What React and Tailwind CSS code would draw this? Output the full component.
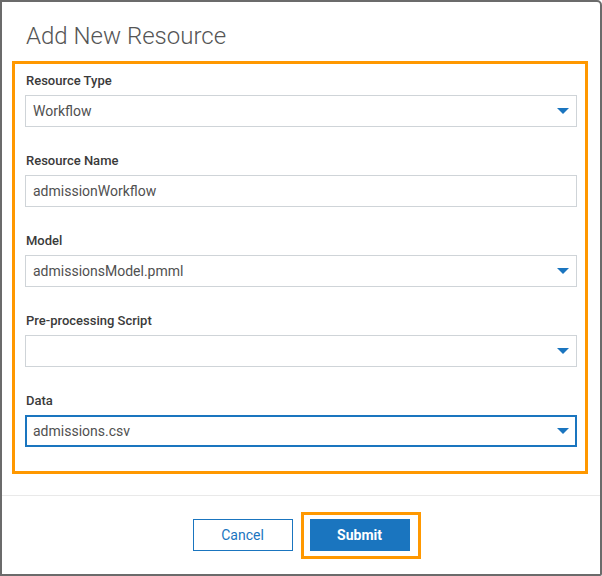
import React from 'react';

const fields = [
  { label: 'Resource Type', value: 'Workflow', select: true },
  { label: 'Resource Name', value: 'admissionWorkflow', select: false },
  { label: 'Model', value: 'admissionsModel.pmml', select: true },
  { label: 'Pre-processing Script', value: '', select: true },
  { label: 'Data', value: 'admissions.csv', select: true, focused: true },
];

function Caret() {
  return (
    <svg width="12" height="6" viewBox="0 0 12 6" className="shrink-0">
      <path d="M0 0 H12 L6 6 Z" fill="#1a75bf" />
    </svg>
  );
}

function Field({ label, value, select, focused }) {
  return (
    <div className="flex flex-col">
      <label className="text-[13px] leading-4 font-medium text-[#3a3a3a] pl-px mb-[6px]">{label}</label>
      <div
        className={
          'h-8 flex items-center justify-between bg-white ' +
          (focused ? 'border-2 border-[#1a75bf] pl-[6px] pr-[6px]' : 'border border-[#cfd4d8] pl-[7px] pr-[7px]')
        }
      >
        <span className="text-[14px] text-[#505050]">{value}</span>
        {select && <Caret />}
      </div>
    </div>
  );
}

export default function App() {
  return (
    <div
      className="w-[602px] h-[576px] bg-white border-2 border-[#6b6b6b] rounded-tr-[5px] rounded-br-[2px] flex flex-col"
      style={{ fontFamily: 'Roboto, "Liberation Sans", sans-serif' }}
    >
      <h1 className="pl-6 pt-[20px] text-[24px] leading-7 font-light text-[#555] mb-[11px]">Add New Resource</h1>

      <div className="ml-[10px] mr-[12px] border-[3px] border-[#ff9800] pl-[10px] pr-[8px] pt-[9px] pb-[24px] flex flex-col gap-[26px]">
        {fields.map((f) => (
          <Field key={f.label} {...f} />
        ))}
      </div>

      <div className="mt-[21px] border-t border-[#e9e9e9] flex-1 flex justify-center items-start pt-[23px] gap-[17px]">
        <button className="w-[100px] h-8 border border-[#1a75bf] text-[#1a75bf] text-[14px] bg-white">Cancel</button>
        <span className="relative">
          <span className="absolute -left-[9px] -right-[11px] -top-[7px] -bottom-[8px] border-[3px] border-[#ff9800]" />
          <button className="relative w-[100px] h-8 bg-[#1a75bf] text-white text-[14px] font-bold">Submit</button>
        </span>
      </div>
    </div>
  );
}
